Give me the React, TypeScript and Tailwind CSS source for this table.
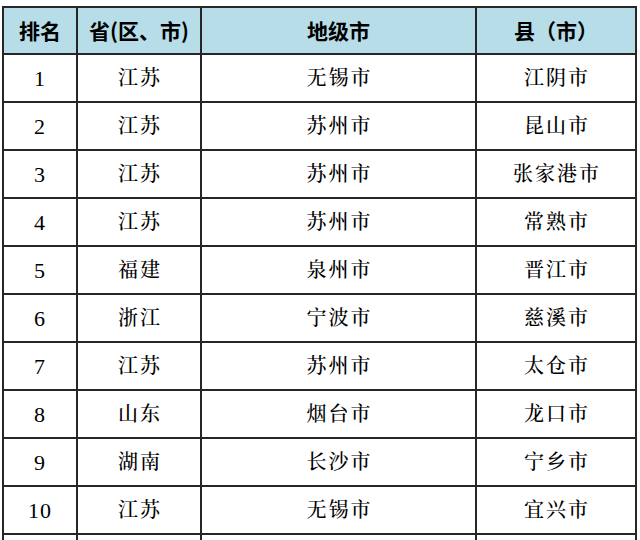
const rows: [string, string, string, string][] = [
  ["1", "江苏", "无锡市", "江阴市"],
  ["2", "江苏", "苏州市", "昆山市"],
  ["3", "江苏", "苏州市", "张家港市"],
  ["4", "江苏", "苏州市", "常熟市"],
  ["5", "福建", "泉州市", "晋江市"],
  ["6", "浙江", "宁波市", "慈溪市"],
  ["7", "江苏", "苏州市", "太仓市"],
  ["8", "山东", "烟台市", "龙口市"],
  ["9", "湖南", "长沙市", "宁乡市"],
  ["10", "江苏", "无锡市", "宜兴市"],
]

const headers = ["排名", "省(区、市)", "地级市", "县（市）"]

export default function App() {
  return (
    <div className="h-[540px] overflow-hidden bg-white pt-[6px] pl-[2px]">
      <div
        className="grid w-[635px] grid-cols-[72px_122px_273px_158px] gap-[2px] bg-[#262626] p-[2px] text-black"
        style={{ fontFamily: '"Liberation Serif", "Noto Serif CJK SC", "Noto Sans CJK SC", serif' }}
      >
        {headers.map((h) => (
          <div
            key={h}
            className="flex h-[45px] items-center justify-center bg-[#b7dde8] text-[21px] font-bold"
            style={{ fontFamily: '"Noto Sans CJK SC", sans-serif' }}
          >
            {h}
          </div>
        ))}
        {rows.map((r) =>
          r.map((c, i) => (
            <div
              key={r[0] + "-" + i}
              className={
                "flex h-[46px] items-center justify-center bg-white " +
                (i === 0
                  ? "text-[22px] tracking-[1px]"
                  : "text-[20px] font-medium tracking-[2px] pl-[2px]")
              }
            >
              {c}
            </div>
          ))
        )}
        {[0, 1, 2, 3].map((i) => (
          <div key={"empty-" + i} className="h-[46px] bg-white" />
        ))}
      </div>
    </div>
  )
}
